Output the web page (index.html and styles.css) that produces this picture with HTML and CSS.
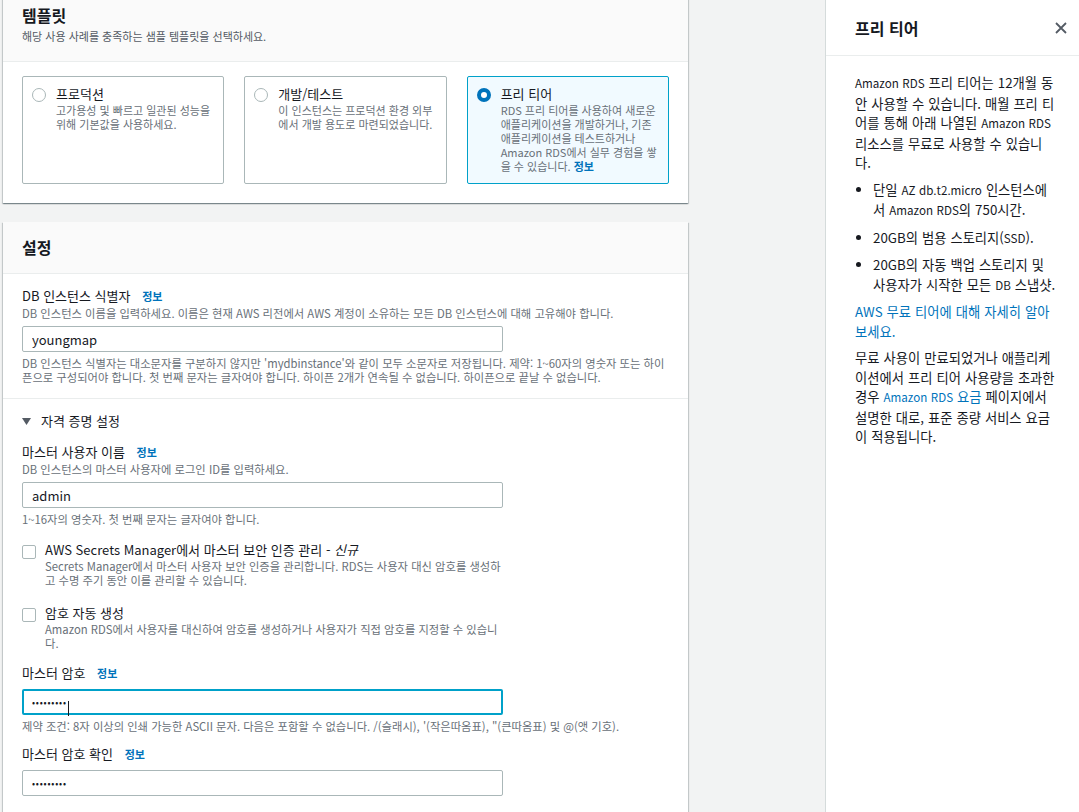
FILE: index.html
```html
<!DOCTYPE html>
<html lang="ko">
<head>
  <meta charset="UTF-8" />
  <meta name="viewport" content="width=device-width, initial-scale=1.0">
  <title>데이터베이스 생성</title>
  <link rel="stylesheet" href="styles.css">
</head>
<body>
  <div class="layout">
    <main class="content">
      <section class="panel">
        <div class="panel-header">
          <h2>템플릿</h2>
          <p class="panel-sub">해당 사용 사례를 충족하는 샘플 템플릿을 선택하세요.</p>
        </div>
        <div class="panel-body tiles">
          <label class="tile">
            <span class="radio"></span>
            <span class="tile-text">
              <span class="tile-title">프로덕션</span>
              <span class="tile-desc">고가용성 및 빠르고 일관된 성능을 위해 기본값을 사용하세요.</span>
            </span>
          </label>
          <label class="tile">
            <span class="radio"></span>
            <span class="tile-text">
              <span class="tile-title">개발/테스트</span>
              <span class="tile-desc">이 인스턴스는 프로덕션 환경 외부에서 개발 용도로 마련되었습니다.</span>
            </span>
          </label>
          <label class="tile selected">
            <span class="radio checked"></span>
            <span class="tile-text">
              <span class="tile-title">프리 티어</span>
              <span class="tile-desc">RDS 프리 티어를 사용하여 새로운 애플리케이션을 개발하거나, 기존 애플리케이션을 테스트하거나 Amazon RDS에서 실무 경험을 쌓을 수 있습니다. <a class="info" href="#">정보</a></span>
            </span>
          </label>
        </div>
      </section>

      <section class="panel">
        <div class="panel-header settings-header">
          <h2>설정</h2>
        </div>

        <div class="panel-body group">
          <div class="field">
            <div class="label">DB 인스턴스 식별자 <a class="info" href="#">정보</a></div>
            <div class="desc">DB 인스턴스 이름을 입력하세요. 이름은 현재 AWS 리전에서 AWS 계정이 소유하는 모든 DB 인스턴스에 대해 고유해야 합니다.</div>
            <input class="text-input" type="text" value="youngmap">
            <div class="hint">DB 인스턴스 식별자는 대소문자를 구분하지 않지만 'mydbinstance'와 같이 모두 소문자로 저장됩니다. 제약: 1~60자의 영숫자 또는 하이픈으로 구성되어야 합니다. 첫 번째 문자는 글자여야 합니다. 하이픈 2개가 연속될 수 없습니다. 하이픈으로 끝날 수 없습니다.</div>
          </div>
        </div>

        <div class="panel-body group last">
          <div class="expander">
            <svg width="9" height="7" viewBox="0 0 9 7"><polygon points="0,0 9,0 4.5,7" fill="#545b64"/></svg>
            <span>자격 증명 설정</span>
          </div>

          <div class="field">
            <div class="label">마스터 사용자 이름 <a class="info" href="#">정보</a></div>
            <div class="desc">DB 인스턴스의 마스터 사용자에 로그인 ID를 입력하세요.</div>
            <input class="text-input" type="text" value="admin">
            <div class="hint">1~16자의 영숫자. 첫 번째 문자는 글자여야 합니다.</div>
          </div>

          <div class="check">
            <span class="box"></span>
            <div>
              <div class="check-label">AWS Secrets Manager에서 마스터 보안 인증 관리 - <em>신규</em></div>
              <div class="desc">Secrets Manager에서 마스터 사용자 보안 인증을 관리합니다. RDS는 사용자 대신 암호를 생성하고 수명 주기 동안 이를 관리할 수 있습니다.</div>
            </div>
          </div>

          <div class="check second">
            <span class="box"></span>
            <div>
              <div class="check-label">암호 자동 생성</div>
              <div class="desc">Amazon RDS에서 사용자를 대신하여 암호를 생성하거나 사용자가 직접 암호를 지정할 수 있습니다.</div>
            </div>
          </div>

          <div class="field pw-field">
            <div class="label">마스터 암호 <a class="info" href="#">정보</a></div>
            <div class="input-wrap">
              <input class="text-input pw focused" type="password" value="password1">
              <span class="caret"></span>
            </div>
            <div class="hint">제약 조건: 8자 이상의 인쇄 가능한 ASCII 문자. 다음은 포함할 수 없습니다. /(슬래시), '(작은따옴표), "(큰따옴표) 및 @(앳 기호).</div>
          </div>

          <div class="field">
            <div class="label">마스터 암호 확인 <a class="info" href="#">정보</a></div>
            <input class="text-input pw" type="password" value="password1">
          </div>
        </div>
      </section>
    </main>

    <aside class="help">
      <div class="help-header">
        <h2>프리 티어</h2>
        <svg class="close" width="12" height="12" viewBox="0 0 12 12"><path d="M1 1L11 11M11 1L1 11" stroke="#545b64" stroke-width="1.8" fill="none"/></svg>
      </div>
      <div class="help-body">
        <p><span class="en">Amazon RDS</span> 프리 티어는 12개월 동안 사용할 수 있습니다. 매월 프리 티어를 통해 아래 나열된 <span class="en">Amazon RDS</span> 리소스를 무료로 사용할 수 있습니다.</p>
        <ul>
          <li>단일 <span class="en">AZ db.t2.micro</span> 인스턴스에서 <span class="en">Amazon RDS</span>의 750시간.</li>
          <li>20GB의 범용 스토리지(<span class="en">SSD</span>).</li>
          <li>20GB의 자동 백업 스토리지 및 사용자가 시작한 모든 <span class="en">DB</span> 스냅샷.</li>
        </ul>
        <p><a href="#">AWS 무료 티어에 대해 자세히 알아보세요.</a></p>
        <p>무료 사용이 만료되었거나 애플리케이션에서 프리 티어 사용량을 초과한 경우 <a href="#"><span class="en">Amazon RDS</span> 요금</a> 페이지에서 설명한 대로, 표준 종량 서비스 요금이 적용됩니다.</p>
      </div>
    </aside>
  </div>
</body>
</html>
```

FILE: styles.css
```css
body {
  margin: 0;
  background: #f2f3f3;
  color: #16191f;
  font-family: "Noto Sans CJK KR", "Noto Sans", sans-serif;
  font-size: 13px;
  overflow: hidden;
}
a {
  color: #0073bb;
  text-decoration: none;
}
.layout {
  display: flex;
  height: 100vh;
}
.content {
  width: 685px;
  margin: -16px 0 0 3px;
  flex-shrink: 0;
}
.panel {
  background: white;
  margin-bottom: 19px;
  box-shadow: 0 1px 1px 0 rgba(0,28,36,0.3), 1px 1px 1px 0 rgba(0,28,36,0.15), -1px 1px 1px 0 rgba(0,28,36,0.15);
}
.panel-header {
  background: #fafafa;
  border-bottom: 1px solid #eaeded;
  padding: 20px 19px 17px;
}
.panel-header h2 {
  margin: 0;
  font-size: 16px;
  line-height: 22px;
  font-weight: 700;
}
.panel-sub {
  margin: 2px 0 0;
  font-size: 11px;
  line-height: 16px;
  color: #545b64;
}
.settings-header {
  padding: 14px 19px 15px;
}

/* template tiles */
.tiles {
  display: grid;
  grid-template-columns: repeat(3, 1fr);
  gap: 20px;
  padding: 14px 19px 19px;
}
.tile {
  display: flex;
  gap: 10px;
  border: 1px solid #aab7b8;
  border-radius: 2px;
  padding: 8px 4px 10px 9px;
}
.tile.selected {
  border-color: #00a1c9;
  background: #f1faff;
}
.radio {
  width: 12px;
  height: 12px;
  margin-top: 3px;
  border: 1px solid #aab7b8;
  border-radius: 50%;
  background: white;
  flex-shrink: 0;
}
.radio.checked {
  width: 6px;
  height: 6px;
  border: 4px solid #0073bb;
}
.tile-title {
  display: block;
  font-size: 13px;
  line-height: 18px;
}
.tile-desc {
  display: block;
  font-size: 11px;
  line-height: 14px;
  color: #687078;
}
.info {
  font-weight: 700;
  font-size: 11px;
  margin-left: 8px;
}
.tile-desc .info {
  margin-left: 0;
}

/* settings form */
.group {
  padding: 12px 19px 14px;
  border-bottom: 1px solid #eaeded;
}
.group.last {
  padding-bottom: 40px;
}
.field {
  max-width: 647px;
}
.label {
  line-height: 20px;
}
.desc {
  font-size: 11.3px;
  line-height: 14px;
  color: #687078;
}
.hint {
  margin-top: 4px;
  font-size: 11.3px;
  line-height: 14px;
  color: #687078;
}
.text-input {
  display: block;
  box-sizing: border-box;
  width: 481px;
  height: 26px;
  margin-top: 6px;
  padding: 0 9px;
  border: 1px solid #aab7b8;
  border-radius: 2px;
  font-family: inherit;
  font-size: 13px;
  color: #16191f;
}
.text-input.pw {
  font-size: 9px;
  letter-spacing: 0.8px;
}
.text-input.focused {
  border: 2px solid #00a1c9;
  padding-left: 8px;
  outline: none;
}
.input-wrap {
  position: relative;
  width: 481px;
}
.caret {
  position: absolute;
  left: 46px;
  top: 12px;
  width: 1px;
  height: 15px;
  background: #16191f;
}
.expander {
  display: flex;
  align-items: center;
  gap: 10px;
  line-height: 20px;
  margin-bottom: 11px;
}
.expander svg {
  margin-top: 1px;
}
.check {
  display: flex;
  gap: 9px;
  max-width: 481px;
  margin-top: 15px;
}
.check.second {
  margin-top: 17px;
}
.check .box {
  width: 12px;
  height: 12px;
  margin-top: 4px;
  border: 1px solid #aab7b8;
  border-radius: 2px;
  flex-shrink: 0;
}
.check-label {
  line-height: 18px;
}
.check-label em {
  font-style: italic;
}
.pw-field {
  margin-top: 13px;
}
.pw-field + .field {
  margin-top: 11px;
}

/* help panel */
.help {
  flex: 0 0 253px;
  margin-left: auto;
  background: white;
  border-left: 1px solid #d5dbdb;
}
.help-header {
  display: flex;
  align-items: center;
  justify-content: space-between;
  height: 55px;
  padding: 0 12px 0 29px;
  border-bottom: 1px solid #eaeded;
}
.help-header h2 {
  margin: 0;
  font-size: 16px;
  font-weight: 700;
}
.help-body {
  padding: 10px 22px 0 29px;
  font-size: 13.3px;
  line-height: 19.5px;
  word-spacing: 0.3px;
  color: #16191f;
}
.help-body .en {
  font-size: 11.6px;
}
.help-body p {
  margin: 7px 0 0;
}
.help-body ul {
  margin: 7px 0 0;
  padding-left: 18px;
}
.help-body li {
  margin-bottom: 7px;
}
```
